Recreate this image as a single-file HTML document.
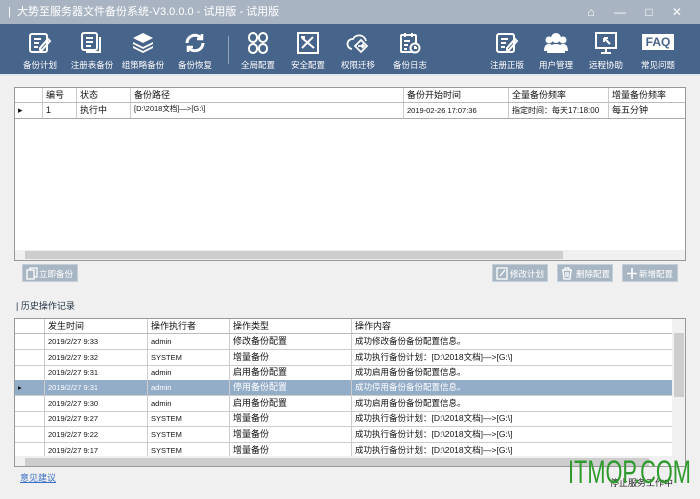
<!DOCTYPE html>
<html><head><meta charset="utf-8"><style>
*{margin:0;padding:0;box-sizing:border-box}
body{width:700px;height:499px;overflow:hidden;background:#f0f0f0;font-family:"Liberation Sans","Noto Sans CJK SC",sans-serif;font-size:9px;color:#111;position:relative}
.abs{position:absolute}
#title{left:0;top:0;width:700px;height:24px;background:#a9b4c2;color:#fff;font-size:11px;line-height:24px;padding-left:8px}
#tb{left:0;top:24px;width:700px;height:50px;background:#47648b}
.tool{position:absolute;top:0;width:54px;text-align:center;color:#fff;font-size:8.5px}
.tool svg{position:absolute;left:15px;top:8px}
.tool span{position:absolute;left:0;width:54px;top:35px}
.grid{background:#fff;border:1px solid #999}
.hd{background:#fff;height:15px;border-bottom:1px solid #bbb}
.cell{position:absolute;white-space:nowrap;line-height:15px;padding-left:3px;border-left:1px solid #ccc;height:100%}
.row{position:absolute;left:0;height:16px;border-bottom:1px solid #ccc}
.btn{background:#a8b6c4;color:#fff;height:18px;line-height:18px;font-size:8.5px;border:1px solid #c4ced8}
.btn svg{position:absolute;left:3px;top:2px}
</style></head><body>
<div id="title" class="abs">| &nbsp;大势至服务器文件备份系统-V3.0.0.0 - 试用版 - 试用版
<span style="position:absolute;right:10px;top:0;font-size:12px;letter-spacing:8px">⌂ — □ ✕</span></div>
<div id="tb" class="abs">
<div class="tool" style="left:13px"><svg width="24" height="22" viewBox="0 0 24 22" fill="none" stroke="#fff" stroke-width="2"><rect x="2" y="2" width="17" height="18" rx="2"/><path d="M6 7h7M6 11h5M6 15h4M12 16l8-9 2 2-8 9h-2z"/></svg><span>备份计划</span></div>
<div class="tool" style="left:65px"><svg width="24" height="22" viewBox="0 0 24 22" fill="none" stroke="#fff" stroke-width="2"><rect x="2" y="1" width="15" height="17" rx="2"/><path d="M6 6h7M6 10h7M6 14h5M20 5v15H6"/></svg><span>注册表备份</span></div>
<div class="tool" style="left:116px"><svg width="24" height="22" viewBox="0 0 24 22" fill="#fff"><path d="M12 1l10 5-10 5-10-5z"/><path d="M2 10l10 5 10-5v2l-10 5-10-5zM2 14l10 5 10-5v2l-10 5-10-5z"/></svg><span>组策略备份</span></div>
<div class="tool" style="left:168px"><svg width="24" height="22" viewBox="0 0 24 22" fill="none" stroke="#fff" stroke-width="3"><path d="M4 11a8 8 0 0 1 14-5M20 11a8 8 0 0 1-14 5"/><path d="M19 2v5h-5M5 20v-5h5" stroke-width="2.5"/></svg><span>备份恢复</span></div>
<div class="abs" style="left:228px;top:12px;width:1px;height:28px;background:#8fa3bd"></div>
<div class="tool" style="left:231px"><svg width="24" height="22" viewBox="0 0 24 22" fill="none" stroke="#fff" stroke-width="2"><rect x="3" y="1" width="8" height="9" rx="4"/><rect x="13" y="1" width="8" height="9" rx="4"/><rect x="3" y="12" width="8" height="9" rx="4"/><rect x="13" y="12" width="8" height="9" rx="4"/></svg><span>全局配置</span></div>
<div class="tool" style="left:281px"><svg width="24" height="22" viewBox="0 0 24 22" fill="none" stroke="#fff" stroke-width="2"><rect x="2" y="1" width="20" height="20"/><path d="M6 6l12 10M17 5l-11 11M5 5l3 0 0 3"/></svg><span>安全配置</span></div>
<div class="tool" style="left:331px"><svg width="24" height="22" viewBox="0 0 24 22" fill="none" stroke="#fff" stroke-width="1.8"><path d="M6 17a5 5 0 0 1 1-10 7 7 0 0 1 13 2"/><path d="M15 8l6 6-6 6-6-6z"/><path d="M12 14h6M16 12l2 2-2 2"/></svg><span>权限迁移</span></div>
<div class="tool" style="left:383px"><svg width="24" height="22" viewBox="0 0 24 22" fill="none" stroke="#fff" stroke-width="2"><rect x="3" y="3" width="15" height="17" rx="1"/><path d="M7 1v4M14 1v4M6 9h6M6 13h4M6 17h3"/><circle cx="17" cy="16" r="4.5" fill="#47648b"/><path d="M17 14v2h2"/></svg><span>备份日志</span></div>
<div class="tool" style="left:480px"><svg width="24" height="22" viewBox="0 0 24 22" fill="none" stroke="#fff" stroke-width="2"><rect x="2" y="2" width="17" height="18" rx="2"/><path d="M6 7h7M6 11h5M6 15h4M12 16l8-9 2 2-8 9h-2z"/></svg><span>注册正版</span></div>
<div class="tool" style="left:529px"><svg width="24" height="22" viewBox="0 0 24 22" fill="#fff"><circle cx="12" cy="6" r="5"/><circle cx="5" cy="8" r="3.5"/><circle cx="19" cy="8" r="3.5"/><path d="M3 21c0-6 4-9 9-9s9 3 9 9z"/><path d="M0 19c0-5 2-7 5-7 2 0 3 1 3 1v6zM24 19c0-5-2-7-5-7-2 0-3 1-3 1v6z"/></svg><span>用户管理</span></div>
<div class="tool" style="left:579px"><svg width="24" height="22" viewBox="0 0 24 22" fill="none" stroke="#fff" stroke-width="2"><rect x="2" y="1" width="20" height="15"/><path d="M12 16v4M7 21h10M10 6l6 6M10 6v4M10 6h4"/></svg><span>远程协助</span></div>
<div class="tool" style="left:631px"><div style="position:absolute;left:11px;top:10px;width:32px;height:16px;background:#fff;color:#47648b;font-weight:bold;font-size:12px;line-height:16px">FAQ</div><span>常见问题</span></div>
</div>
<div class="abs" style="left:0;top:74px;width:700px;height:2px;background:#dfe6ee"></div>

<!-- top grid -->
<div class="abs grid" style="left:14px;top:87px;width:672px;height:174px">
<div class="hd" style="position:relative">
<div class="cell" style="left:27px">编号</div><div class="cell" style="left:61px">状态</div><div class="cell" style="left:115px">备份路径</div><div class="cell" style="left:388px">备份开始时间</div><div class="cell" style="left:493px">全量备份频率</div><div class="cell" style="left:593px">增量备份频率</div></div>
<div class="row" style="top:15px;width:670px;border-bottom:1px solid #aaa">
<div class="cell" style="left:0;border:0">▸</div>
<div class="cell" style="left:27px">1</div><div class="cell" style="left:61px">执行中</div><div class="cell" style="left:115px;font-size:7.5px;line-height:12px">[D:\2018文档]—>[G:\]</div><div class="cell" style="left:388px;font-size:7.5px">2019-02-26 17:07:36</div><div class="cell" style="left:493px;font-size:8px">指定时间：每天17:18:00</div><div class="cell" style="left:593px">每五分钟</div></div>
<div class="abs" style="left:0;top:162px;width:670px;height:10px;background:#f0f0f0"><div class="abs" style="left:10px;top:1px;width:538px;height:8px;background:#cdcdcd"></div></div>
</div>

<div class="abs btn" style="left:22px;top:264px;width:56px;padding-left:16px"><svg width="12" height="13" viewBox="0 0 12 13" fill="none" stroke="#fff" stroke-width="1.3"><rect x="1" y="3" width="7" height="9"/><path d="M4 3V1h7v9H8"/></svg>立即备份</div>
<div class="abs btn" style="left:492px;top:264px;width:56px;padding-left:17px"><svg width="12" height="13" viewBox="0 0 12 13" fill="none" stroke="#fff" stroke-width="1.3"><rect x="1" y="1" width="10" height="11"/><path d="M4 9l5-6"/></svg>修改计划</div>
<div class="abs btn" style="left:557px;top:264px;width:56px;padding-left:18px"><svg width="12" height="13" viewBox="0 0 12 13" fill="none" stroke="#fff" stroke-width="1.3"><path d="M1 3h10M4 3V1h4v2M2 3l1 9h6l1-9M5 5v5M7 5v5"/></svg>删除配置</div>
<div class="abs btn" style="left:622px;top:264px;width:56px;padding-left:16px"><svg width="12" height="13" viewBox="0 0 12 13" fill="none" stroke="#fff" stroke-width="1.6"><path d="M6 1v11M1 6.5h10"/></svg>新增配置</div>

<div class="abs" style="left:16px;top:299px;font-size:9px;color:#234">| 历史操作记录</div>

<!-- bottom grid -->
<div class="abs grid" style="left:14px;top:318px;width:672px;height:149px;overflow:hidden">
<div class="hd" style="position:relative;width:657px">
<div class="cell" style="left:29px">发生时间</div><div class="cell" style="left:132px">操作执行者</div><div class="cell" style="left:214px">操作类型</div><div class="cell" style="left:336px">操作内容</div></div>
<div style="position:absolute;left:0;top:15px;width:657px;font-size:7.5px">
<div class="row" style="top:0;width:657px"><div class="cell" style="left:29px">2019/2/27 9:33</div><div class="cell" style="left:132px">admin</div><div class="cell" style="left:214px;font-size:9px">修改备份配置</div><div class="cell" style="left:336px;font-size:8.5px">成功修改备份备份配置信息。</div></div>
<div class="row" style="top:16px;width:657px"><div class="cell" style="left:29px">2019/2/27 9:32</div><div class="cell" style="left:132px">SYSTEM</div><div class="cell" style="left:214px;font-size:9px">增量备份</div><div class="cell" style="left:336px;font-size:8.5px">成功执行备份计划：[D:\2018文档]—>[G:\]</div></div>
<div class="row" style="top:31px;width:657px"><div class="cell" style="left:29px">2019/2/27 9:31</div><div class="cell" style="left:132px">admin</div><div class="cell" style="left:214px;font-size:9px">启用备份配置</div><div class="cell" style="left:336px;font-size:8.5px">成功启用备份备份配置信息。</div></div>
<div class="row" style="top:46px;width:657px;background:#93acc8;color:#fff"><div class="cell" style="left:0;border:0;color:#111">▸</div><div class="cell" style="left:29px">2019/2/27 9:31</div><div class="cell" style="left:132px">admin</div><div class="cell" style="left:214px;font-size:9px">停用备份配置</div><div class="cell" style="left:336px;font-size:8.5px">成功停用备份备份配置信息。</div></div>
<div class="row" style="top:62px;width:657px"><div class="cell" style="left:29px">2019/2/27 9:30</div><div class="cell" style="left:132px">admin</div><div class="cell" style="left:214px;font-size:9px">启用备份配置</div><div class="cell" style="left:336px;font-size:8.5px">成功启用备份备份配置信息。</div></div>
<div class="row" style="top:77px;width:657px"><div class="cell" style="left:29px">2019/2/27 9:27</div><div class="cell" style="left:132px">SYSTEM</div><div class="cell" style="left:214px;font-size:9px">增量备份</div><div class="cell" style="left:336px;font-size:8.5px">成功执行备份计划：[D:\2018文档]—>[G:\]</div></div>
<div class="row" style="top:93px;width:657px"><div class="cell" style="left:29px">2019/2/27 9:22</div><div class="cell" style="left:132px">SYSTEM</div><div class="cell" style="left:214px;font-size:9px">增量备份</div><div class="cell" style="left:336px;font-size:8.5px">成功执行备份计划：[D:\2018文档]—>[G:\]</div></div>
<div class="row" style="top:109px;width:657px"><div class="cell" style="left:29px">2019/2/27 9:17</div><div class="cell" style="left:132px">SYSTEM</div><div class="cell" style="left:214px;font-size:9px">增量备份</div><div class="cell" style="left:336px;font-size:8.5px">成功执行备份计划：[D:\2018文档]—>[G:\]</div></div>
</div>
<div class="abs" style="left:657px;top:0;width:14px;height:137px;background:#f0f0f0"><div class="abs" style="left:2px;top:14px;width:10px;height:64px;background:#cdcdcd"></div></div>
<div class="abs" style="left:0;top:137px;width:670px;height:11px;background:#f0f0f0"><div class="abs" style="left:10px;top:2px;width:624px;height:8px;background:#cdcdcd"></div></div>
</div>

<div class="abs" style="left:20px;top:471px;color:#3a6fc4;text-decoration:underline;font-size:9px">意见建议</div>
<div class="abs" style="left:610px;top:476px;font-size:9px;color:#222">停止服务工作中</div>
<div class="abs" style="left:568px;top:454px;font-size:32px;color:#2f9b2f;font-family:'Liberation Sans',sans-serif;line-height:36px;white-space:nowrap;transform:scaleX(0.68);transform-origin:0 0">ITMOP.COM</div>
</body></html>
